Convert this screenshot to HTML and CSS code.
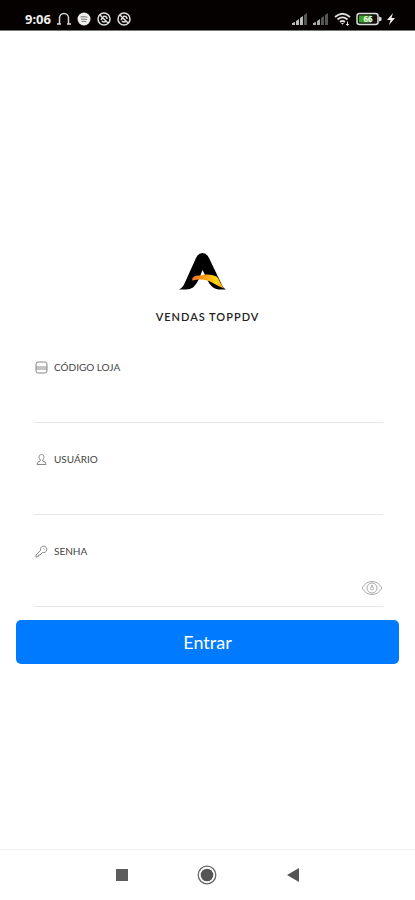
FILE: index.html
```html
<!DOCTYPE html>
<html lang="pt-BR">
<head>
<meta charset="utf-8">
<meta name="viewport" content="width=device-width, initial-scale=1">
<title>Vendas TOPPDV</title>
<link rel="stylesheet" href="styles.css">
</head>
<body>
<header class="status">
  <div class="status-group">
    <span class="clock">9:06</span>
    <svg width="14" height="14" viewBox="0 0 14 14" fill="none" stroke="#d8d8d8" stroke-width="1.5"><path d="M0 12h4M10 12h4M2.500 12V6a4.500 4.500 0 0 1 9 0v6"/></svg>
    <svg width="14" height="14" viewBox="0 0 14 14"><circle cx="7" cy="7" r="6.5" fill="#eee"/><path d="M3.500 5q3.500-1 7 .3M4 7.300q3-.8 6 .3M4.500 9.500q2.500-.6 4.700.3" fill="none" stroke="#777"/></svg>
    <svg width="14" height="14" viewBox="0 0 14 14" fill="none" stroke="#ddd" stroke-width="1.500"><circle cx="7" cy="7" r="6"/><path d="M3 3l8 8M4 8l2-3M6 4.500q4-1 4 2.500M5 9q2 2 4 0"/></svg>
    <svg width="14" height="14" viewBox="0 0 14 14" fill="none" stroke="#ddd" stroke-width="1.500"><circle cx="7" cy="7" r="6"/><path d="M3 3l8 8M4 8l2-3M6 4.500q4-1 4 2.500M5 9q2 2 4 0"/></svg>
  </div>
  <div class="status-group status-right">
    <svg width="16" height="14" viewBox="0 0 16 14"><path d="M0 13V11l3-1v3zM4 13V9l3-2v6zM8 13V6l3-2v9z" fill="#bbb"/><path d="M12 13V3l3-2v12z" fill="#555"/></svg>
    <svg width="16" height="14" viewBox="0 0 16 14"><path d="M0 13V11l3-1v3zM4 13V9l3-2v6z" fill="#aaa"/><path d="M8 13V6l3-2v9zM12 13V3l3-2v12z" fill="#555"/></svg>
    <svg width="17" height="14" viewBox="0 0 17 14" fill="none" stroke="#ddd" stroke-width="1.800"><path d="M1 5q7.500-6.500 15 0M3.500 7.500q5-4.200 10 0M6 10q2.500-2 5 0"/><path d="M7 11h3l-1.500 1.800z" fill="#ddd" stroke="none"/><path d="M13.500 9.500v4M12 12l1.500 1.500L15 12" stroke-width="1"/></svg>
    <svg width="26" height="14" viewBox="0 0 26 14"><rect x="1" y="1.500" width="21" height="11" rx="2.500" fill="#111" stroke="#ddd" stroke-width="1.500"/><path d="M23 4.500l2.500 1v3l-2.500 1z" fill="#ddd"/><rect x="3" y="3.500" width="12" height="7" fill="#39a518"/><text class="charge" x="12" y="10" text-anchor="middle">66</text></svg>
    <svg width="8" height="14" viewBox="0 0 8 14"><path d="M6 1L0 8h3.500L2 13l6-7H4.500z" fill="#eee"/></svg>
  </div>
</header>

<main class="login">
  <svg class="logo" width="60" height="40" viewBox="0 0 60 40" aria-hidden="true">
    <defs><linearGradient id="flame"><stop offset="0" stop-color="#f4712a"/><stop offset=".4" stop-color="#fb9c14"/><stop offset=".75" stop-color="#ffd70f"/><stop offset="1" stop-color="#f79a25"/></linearGradient></defs>
    <path d="M1 37.500Q4.500 36 6.500 31.500L18 6Q20.500 1 24.500 1Q28.500 1 31 6L43 31Q45 36 48 37.500H41Q35 37 31 31L28.500 26L24.500 18L21 27Q18 33 15 35.500Q12 37.500 8 37.500z" fill="#000"/>
    <path d="M14 28.500Q14 23 22 23.500Q31 21 38.500 24.500L40 26Q42 31 46 36.500Q40 34 34 30.500Q26 25.500 14 28.500z" fill="url(#flame)"/>
  </svg>
  <h1 class="title">VENDAS TOPPDV</h1>

  <form class="form">
    <div class="field">
      <label for="store"><svg width="13" height="13" viewBox="0 0 13 13"><rect x="1" y="1" width="11" height="11" rx="2"/><path d="M1 6h11M1 8h11"/></svg>CÓDIGO LOJA</label>
      <input id="store" type="text">
    </div>
    <div class="field">
      <label for="user"><svg width="13" height="13" viewBox="0 0 13 13"><path d="M6.500 1.500c-3 0-3 3.500-1.200 5.500v1L3 9l-1 2.500h9L10 9 7.700 8V7c1.800-2 1.800-5.500-1.200-5.500z"/></svg>USUÁRIO</label>
      <input id="user" type="text">
    </div>
    <div class="field">
      <label for="password"><svg width="13" height="13" viewBox="0 0 13 13"><path d="M5.500 5.500C5 2.500 7 1 9 1.200c2 .2 3 2 2.700 3.600C11.300 7 9.500 8 7.500 7.500L5 10H3.500v1.500L1 12v-2z"/><path d="M8.500 3.500l1 1"/></svg>SENHA</label>
      <div class="password">
        <input id="password" type="password">
        <button class="reveal" type="button" aria-label="Mostrar senha"><svg width="22" height="16" viewBox="0 0 22 16"><path d="M1 8Q5 1.500 11 1.500T21 8Q17 14.500 11 14.500T1 8z"/><circle cx="11" cy="8" r="5"/><path d="M11 5l-1.500 3.500a1.500 1.500 0 1 0 3 0z"/></svg></button>
      </div>
    </div>
    <button class="submit" type="submit">Entrar</button>
  </form>
</main>

<nav class="system">
  <button type="button" aria-label="Recentes"><svg width="20" height="20" viewBox="0 0 20 20"><rect x="4" y="4" width="12" height="12" fill="#5c5c5c"/></svg></button>
  <button type="button" aria-label="Início"><svg width="20" height="20" viewBox="0 0 20 20"><circle cx="10" cy="10" r="8.800" fill="#fff" stroke="#666" stroke-width="1.300"/><circle cx="10" cy="10" r="6.300" fill="#555"/></svg></button>
  <button type="button" aria-label="Voltar"><svg width="20" height="20" viewBox="0 0 20 20"><path d="M4 10l12-7v14z" fill="#555"/></svg></button>
</nav>
</body>
</html>
```
FILE: styles.css
```css
* { box-sizing: border-box; }

body {
  margin: 0;
  min-height: 100vh;
  display: flex;
  flex-direction: column;
  background: #fff;
  color: #222;
  font-family: Lato, "Open Sans", sans-serif;
}

svg { display: block; flex: none; }

button {
  border: 0;
  padding: 0;
  background: none;
  font: inherit;
}

.status {
  height: 31px;
  padding: 8px 20px 0 25px;
  display: flex;
  align-items: center;
  justify-content: space-between;
  background: #050101;
  border-bottom: 1px solid #777;
}

.status-group {
  display: flex;
  align-items: center;
  gap: 6px;
}

.status-right { gap: 5px; }

.clock {
  color: #eee;
  font: 700 13px/14px "Noto Sans", sans-serif;
}

.charge {
  fill: #fff;
  font: 700 8px "Noto Sans", sans-serif;
}

.login {
  flex: 1;
  padding: 221px 16px 24px;
  display: flex;
  flex-direction: column;
  align-items: center;
}

.title {
  margin: 17px 0 0;
  font-size: 11px;
  line-height: 16px;
  font-weight: 600;
  letter-spacing: 1px;
  color: #222;
}

.form {
  width: 100%;
  margin-top: 34px;
}

.field {
  margin: 0 16px 28px 18px;
  border-bottom: 1px solid #e6e6e6;
}

.field label {
  display: flex;
  align-items: center;
  gap: 6px;
  padding-left: 1px;
  font-size: 10px;
  line-height: 16px;
  color: #444;
}

.field label svg {
  fill: none;
  stroke: #888;
}

.field input {
  display: block;
  width: 100%;
  height: 47px;
  padding: 0;
  border: 0;
  outline: 0;
  background: none;
  font: 16px Lato, sans-serif;
}

.password {
  display: flex;
  align-items: flex-end;
}

.password input {
  flex: 1;
  min-width: 0;
}

.reveal { padding-bottom: 10px; }

.reveal svg {
  fill: none;
  stroke: #aaa;
}

.field:last-of-type { margin-bottom: 13px; }

.submit {
  display: block;
  width: 100%;
  height: 44px;
  border-radius: 5px;
  background: #007bff;
  color: #fff;
  font-size: 18px;
}

.system {
  height: 51px;
  padding: 0 79px;
  display: flex;
  align-items: center;
  justify-content: space-around;
  border-top: 1px solid #f0f0f0;
}
```
